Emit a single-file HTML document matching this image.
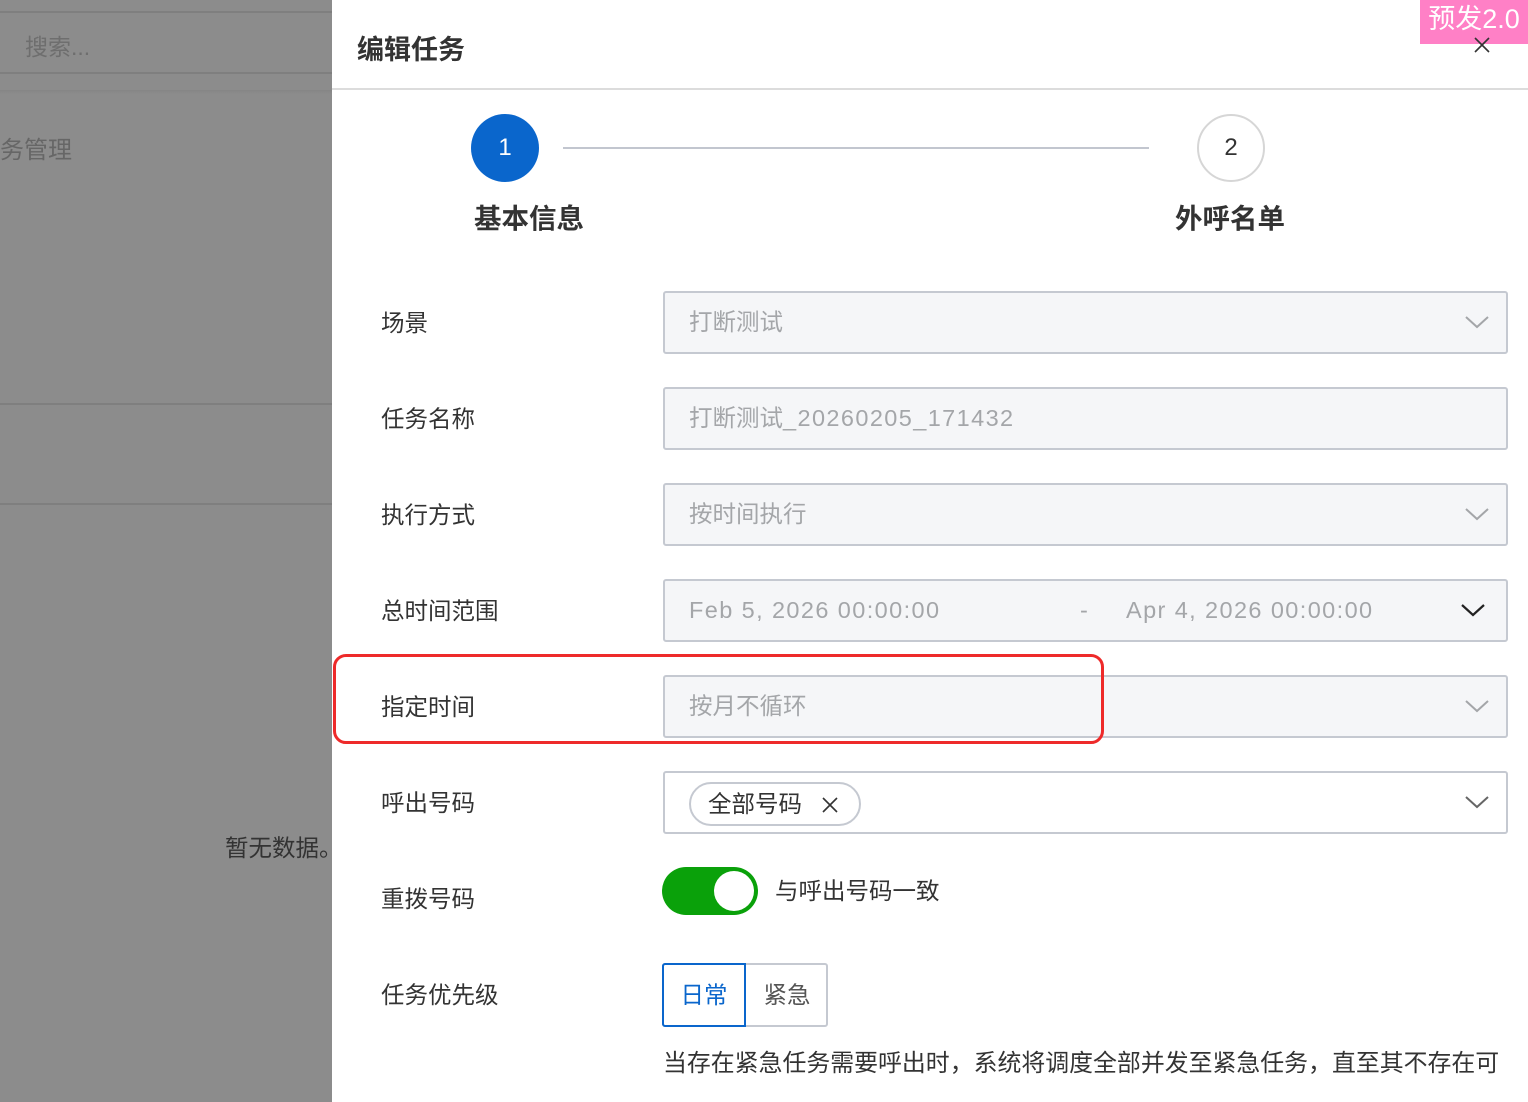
<!DOCTYPE html>
<html><head><meta charset="utf-8"><style>
*{margin:0;padding:0;box-sizing:border-box}
body{width:1528px;height:1102px;overflow:hidden;position:relative;background:#fff;font-family:"Liberation Sans","Noto Sans CJK SC",sans-serif;color:#333}
.abs{position:absolute}
.left{left:0;top:0;width:332px;height:1102px;background:#8c8c8c}
.hl{position:absolute;left:0;width:332px;height:2px;background:#7f7f7f}
.lbl{position:absolute;left:381px;font-size:23.5px;color:#333;line-height:30px}
.inp{position:absolute;left:663px;width:845px;height:63px;background:#f5f6f8;border:2px solid #c5c9d1;border-radius:3px;font-size:23.5px;color:#a4a6a9;line-height:59px;padding-left:24px;white-space:nowrap}
.chev{position:absolute;right:16px;top:20px}
.lat{letter-spacing:1.4px}
</style></head><body>
<div class="abs left">
  <div class="hl" style="top:11px"></div>
  <div class="abs" style="left:25px;top:28px;font-size:23px;color:#6e6e6e">搜索...</div>
  <div class="hl" style="top:72px"></div>
  <div class="abs" style="left:0;top:90px;width:332px;height:4px;background:linear-gradient(#858585,#8c8c8c)"></div>
  <div class="abs" style="left:0;top:130px;font-size:24px;color:#666">务管理</div>
  <div class="hl" style="top:403px"></div>
  <div class="hl" style="top:503px"></div>
  <div class="abs" style="left:225px;top:829px;font-size:23.5px;color:#333;white-space:nowrap">暂无数据。</div>
</div>
<div class="abs" style="left:357px;top:28px;font-size:27px;font-weight:bold;color:#333">编辑任务</div>
<div class="abs" style="left:1420px;top:0;width:108px;height:44px;background:#ff80c6;color:#fff;font-size:27px;line-height:38px;text-align:center">预发2.0</div>
<svg class="abs" style="left:1472px;top:35px" width="20" height="20"><path d="M3 3L17 17M17 3L3 17" stroke="#333" stroke-width="1.6"/></svg>
<div class="abs" style="left:332px;top:88px;width:1196px;height:2px;background:#dcdcdc"></div>
<div class="abs" style="left:471px;top:114px;width:68px;height:68px;border-radius:50%;background:#0a66cc;color:#fff;font-size:24px;text-align:center;line-height:68px">1</div>
<div class="abs" style="left:563px;top:147px;width:586px;height:2px;background:#c2c6cf"></div>
<div class="abs" style="left:1197px;top:114px;width:68px;height:68px;border-radius:50%;border:2px solid #d6d6d6;color:#333;font-size:24px;text-align:center;line-height:64px">2</div>
<div class="abs" style="left:474px;top:196px;font-size:27.5px;font-weight:bold">基本信息</div>
<div class="abs" style="left:1175px;top:196px;font-size:27.5px;font-weight:bold">外呼名单</div>

<div class="lbl" style="top:308px">场景</div>
<div class="inp" style="top:291px">打断测试<svg class="chev" width="26" height="18"><path d="M2 4L13 14L24 4" fill="none" stroke="#a4a6a9" stroke-width="2"/></svg></div>
<div class="lbl" style="top:404px">任务名称</div>
<div class="inp" style="top:387px">打断测试<span class="lat">_20260205_171432</span></div>
<div class="lbl" style="top:500px">执行方式</div>
<div class="inp" style="top:483px">按时间执行<svg class="chev" width="26" height="18"><path d="M2 4L13 14L24 4" fill="none" stroke="#a4a6a9" stroke-width="2"/></svg></div>
<div class="lbl" style="top:596px">总时间范围</div>
<div class="inp lat" style="top:579px">Feb 5, 2026 00:00:00<span class="abs" style="left:415px">-</span><span class="abs" style="left:461px">Apr 4, 2026 00:00:00</span><svg class="chev" width="26" height="18" style="right:20px"><path d="M2 4L13 14L24 4" fill="none" stroke="#222" stroke-width="2.2"/></svg></div>
<div class="lbl" style="top:692px">指定时间</div>
<div class="inp" style="top:675px">按月不循环<svg class="chev" width="26" height="18"><path d="M2 4L13 14L24 4" fill="none" stroke="#a4a6a9" stroke-width="2"/></svg></div>
<div class="abs" style="left:333px;top:654px;width:771px;height:90px;border:3.5px solid #ee2a2a;border-radius:13px"></div>
<div class="lbl" style="top:788px">呼出号码</div>
<div class="inp" style="top:771px;background:#fff"><div class="abs" style="left:24px;top:9px;width:172px;height:44px;border:2px solid #c5c9d1;border-radius:22px;color:#333;line-height:40px;padding-left:17px">全部号码<svg class="abs" style="left:130px;top:12px" width="18" height="18"><path d="M2 2L16 16M16 2L2 16" stroke="#333" stroke-width="1.6"/></svg></div><svg class="chev" width="26" height="18"><path d="M2 4L13 14L24 4" fill="none" stroke="#666" stroke-width="2"/></svg></div>
<div class="lbl" style="top:884px">重拨号码</div>
<div class="abs" style="left:662px;top:867px;width:96px;height:48px;border-radius:24px;background:#0aa10a"><div class="abs" style="left:52px;top:4px;width:40px;height:40px;border-radius:50%;background:#fff"></div></div>
<div class="abs" style="left:775px;top:872px;font-size:23.5px;color:#333">与呼出号码一致</div>
<div class="lbl" style="top:980px">任务优先级</div>
<div class="abs" style="left:662px;top:963px;width:166px;height:64px;border:2px solid #c5c9d1;border-radius:3px"></div>
<div class="abs" style="left:662px;top:963px;width:84px;height:64px;border:2px solid #0a66cc;border-radius:3px 0 0 3px;color:#0a66cc;font-size:23.5px;text-align:center;line-height:60px">日常</div>
<div class="abs" style="left:746px;top:963px;width:82px;height:64px;color:#555;font-size:23.5px;text-align:center;line-height:64px">紧急</div>
<div class="abs" style="left:663px;top:1043px;font-size:23.9px;color:#333;white-space:nowrap">当存在紧急任务需要呼出时，系统将调度全部并发至紧急任务，直至其不存在可</div>
</body></html>
